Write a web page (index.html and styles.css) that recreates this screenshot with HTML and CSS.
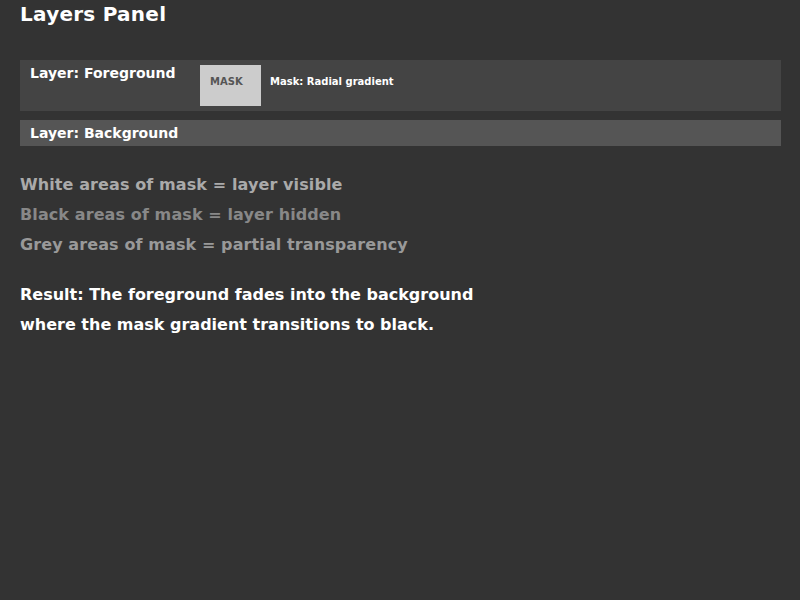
FILE: index.html
```html
<!DOCTYPE html>
<html lang="en">
<head>
    <meta charset="UTF-8">
    <title>Layers Panel</title>
    <link rel="stylesheet" href="styles.css">
</head>
<body>
    <h1>Layers Panel</h1>

    <div class="layer layer-fg">
        <span class="layer-name">Layer: Foreground</span>
        <div class="mask-thumb">MASK</div>
        <span class="mask-label">Mask: Radial gradient</span>
    </div>
    <div class="layer layer-bg">
        <span class="layer-name">Layer: Background</span>
    </div>

    <ul class="legend">
        <li class="white">White areas of mask = layer visible</li>
        <li class="black">Black areas of mask = layer hidden</li>
        <li class="grey">Grey areas of mask = partial transparency</li>
    </ul>

    <p class="result">Result: The foreground fades into the background<br>where the mask gradient transitions to black.</p>
</body>
</html>
```

FILE: styles.css
```css
body { margin: 0; padding: 0 19px 0 20px; background: #333; color: #fff; font-family: "DejaVu Sans", sans-serif; font-weight: bold; }
h1 { margin: 0; padding-top: 2px; font-size: 20px; letter-spacing: 0.25px; line-height: 24px; height: 58px; }
.layer { display: flex; align-items: flex-start; padding: 0 10px; }
.layer-fg { background: #444; height: 51px; padding-top: 4px; box-sizing: border-box; }
.layer-fg .layer-name { width: 170px; font-size: 14px; line-height: 16px; padding-top: 1px; }
.layer-bg { background: #555; height: 26px; margin-top: 9px; align-items: center; }
.layer-bg .layer-name { font-size: 14px; }
.mask-thumb { width: 61px; height: 41px; margin-top: 1px; background: #ccc; color: #555; font-size: 10px; padding: 11px 0 0 10px; box-sizing: border-box; line-height: 12px; }
.mask-label { font-size: 10px; line-height: 12px; padding: 12px 0 0 9px; }
.legend { list-style: none; margin: 24px 0 0; padding: 0; font-size: 16px; letter-spacing: 0.1px; line-height: 30px; }
.legend .white { color: #aaa; }
.legend .black { color: #888; }
.legend .grey { color: #999; }
.result { margin: 20px 0 0; font-size: 16px; line-height: 30px; }
```
